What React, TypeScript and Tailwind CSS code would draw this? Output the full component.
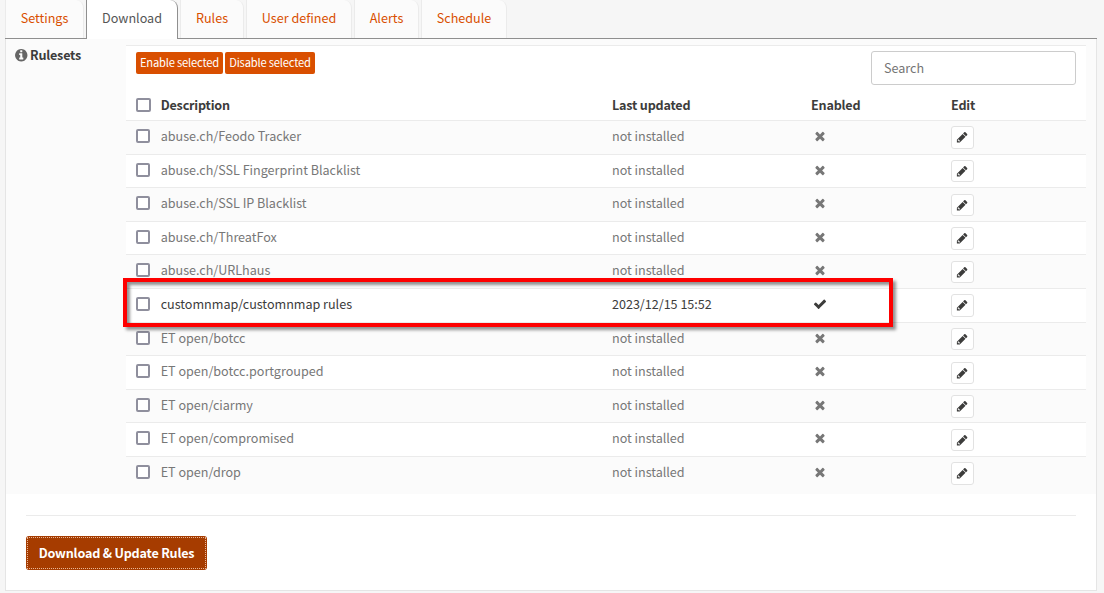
import { useState } from "react";

const ICONS = {
  times:
    "M1490 1322q0 40-28 68l-136 136q-28 28-68 28t-68-28l-294-294-294 294q-28 28-68 28t-68-28l-136-136q-28-28-28-68t28-68l294-294-294-294q-28-28-28-68t28-68l136-136q28-28 68-28t68 28l294 294 294-294q28-28 68-28t68 28l136 136q28 28 28 68t-28 68l-294 294 294 294q28 28 28 68z",
  check:
    "M1671 566q0 40-28 68l-724 724-136 136q-28 28-68 28t-68-28l-136-136-362-362q-28-28-28-68t28-68l136-136q28-28 68-28t68 28l294 295 656-657q28-28 68-28t68 28l136 136q28 28 28 68z",
  pencil:
    "M491 1536l91-91-235-235-91 91v107h128v128h107zM960 416l416 416-832 832h-416v-416zm683 96q0 53-37 90l-166 166-416-416 166-165q36-38 90-38 53 0 91 38l235 234q37 39 37 91z",
  info: "M1152 1376v-160q0-14-9-23t-23-9h-96v-512q0-14-9-23t-23-9h-320q-14 0-23 9t-9 23v160q0 14 9 23t23 9h96v320h-96q-14 0-23 9t-9 23v160q0 14 9 23t23 9h448q14 0 23-9t9-23zm-128-896v-160q0-14-9-23t-23-9h-192q-14 0-23 9t-9 23v160q0 14 9 23t23 9h192q14 0 23-9t9-23zm640 416q0 209-103 385.5t-279.5 279.5-385.5 103-385.5-103-279.5-279.5-103-385.5 103-385.5 279.5-279.5 385.5-103 385.5 103 279.5 279.5 103 385.5z",
};

function Icon({ name, className }: { name: keyof typeof ICONS; className: string }) {
  return (
    <svg viewBox="0 0 1792 1792" fill="currentColor" className={className} aria-hidden="true">
      <path d={ICONS[name]} />
    </svg>
  );
}

function Checkbox({ width = "w-[14px]" }: { width?: string }) {
  const [on, setOn] = useState(false);
  return (
    <button
      type="button"
      role="checkbox"
      aria-checked={on}
      onClick={() => setOn(!on)}
      className={`block h-[14px] ${width} shrink-0 rounded-[2px] border-2 border-[#8f8f9d] ${on ? "bg-[#d94f00]" : "bg-white"}`}
    />
  );
}

const TABS = [
  { label: "Settings", width: "w-[79px]" },
  { label: "Download", width: "w-[92px]" },
  { label: "Rules", width: "w-[64px]" },
  { label: "User defined", width: "w-[106px]" },
  { label: "Alerts", width: "w-[65px]" },
  { label: "Schedule", width: "w-[86px]" },
];

const RULESETS = [
  { name: "abuse.ch/Feodo Tracker" },
  { name: "abuse.ch/SSL Fingerprint Blacklist" },
  { name: "abuse.ch/SSL IP Blacklist" },
  { name: "abuse.ch/ThreatFox" },
  { name: "abuse.ch/URLhaus" },
  { name: "customnmap/customnmap rules", updated: "2023/12/15 15:52" },
  { name: "ET open/botcc" },
  { name: "ET open/botcc.portgrouped" },
  { name: "ET open/ciarmy" },
  { name: "ET open/compromised" },
  { name: "ET open/drop" },
];

const GRID = "grid grid-cols-[34.7px_451.3px_199px_140px_1fr]";

export default function App() {
  return (
    <div className="relative flex h-[593px] w-[1104px] flex-col overflow-hidden bg-[#f6f6f6] pl-[5px] pr-[7px] font-['Noto_Sans_CJK_SC',sans-serif] text-[12.6px] leading-5 text-[#3c3c3b]">
      <nav className="flex h-[39px] shrink-0 gap-[2px] border-b border-[#8f8f8f]">
        {TABS.map((t) => (
          <a
            key={t.label}
            className={`${t.width} flex shrink-0 justify-center rounded-tr-[8px] border-x pt-[8px] ${
              t.label === "Download"
                ? "h-[39px] border-[#8f8f8f] bg-white text-[#555]"
                : "h-[38px] border-[#ebebeb] bg-[#fbfbfb] text-[#d94f00]"
            }`}
          >
            {t.label}
          </a>
        ))}
      </nav>

      <main className="flex h-[552px] flex-col border border-t-0 border-[#e5e5e5] bg-white">
        <div className="flex h-[455px] shrink-0 bg-[#fbfbfb] pr-[10px] pt-[6px]">
          <div className="flex w-[120px] shrink-0 items-start pl-[8px]">
            <Icon name="info" className="mt-[3px] size-[14.5px] text-[#666]" />
            <span className="ml-[1.5px] font-bold tracking-[-0.2px]">Rulesets</span>
          </div>

          <section className="flex flex-1 flex-col">
            <div className="flex h-[75px] shrink-0 flex-col border-t border-[#ebebeb] bg-white">
              <div className="flex h-[49px] shrink-0 items-start justify-between pl-[10px] pr-[10px]">
                <div className="flex gap-[2px] pt-[6px] text-[11.2px] tracking-[-0.2px] text-white">
                  <button className="h-[22px] w-[87px] rounded-[2px] bg-[#d94f00] pb-[2px] leading-[20px]">
                    Enable selected
                  </button>
                  <button className="h-[22px] w-[90px] rounded-[2px] bg-[#d94f00] pb-[2px] leading-[20px]">
                    Disable selected
                  </button>
                </div>
                <input
                  placeholder="Search"
                  className="mt-[5px] h-[34px] w-[205px] rounded-[3px] border border-[#ccc] bg-white px-3 pb-[2px] outline-none placeholder:text-[#757575]"
                />
              </div>
              <div className={`${GRID} font-bold tracking-[-0.2px]`}>
                <span className="pl-[10px] pt-[3px]">
                  <Checkbox width="w-[15px]" />
                </span>
                <span>Description</span>
                <span>Last updated</span>
                <span>Enabled</span>
                <span>Edit</span>
              </div>
            </div>
            {RULESETS.map((r, i) => (
              <div
                key={r.name}
                className={`${GRID} h-[33.6px] shrink-0 border-t border-[#ebebeb] pt-[5px] tracking-[-0.02px] ${i % 2 ? "bg-white" : "bg-[#fbfbfb]"} ${r.updated ? "" : "text-[#777]"}`}
              >
                <span className="pl-[10px] pt-[3px]">
                  <Checkbox />
                </span>
                <span>{r.name}</span>
                <span>{r.updated ?? "not installed"}</span>
                <span className="pl-[2px] pt-[3px]">
                  <Icon name={r.updated ? "check" : "times"} className="size-[14px]" />
                </span>
                <button className="mt-[0.4px] flex h-[22.4px] w-[23px] items-center justify-center rounded-[3px] border border-[#e2e2e2] bg-white text-[#3c3c3b]">
                  <Icon name="pencil" className="size-[12.4px]" />
                </button>
              </div>
            ))}
          </section>
        </div>
        <hr className="mx-5 mt-[21px] border-[#ebebeb]" />
        <button className="ml-5 mt-5 h-[34px] w-[181px] rounded-[3px] bg-[#a63c00] p-px font-bold tracking-[-0.2px] text-white">
          <span className="flex h-full items-center justify-center border border-dotted border-[#e9b698]">
            Download &amp; Update Rules
          </span>
        </button>
      </main>

      <div className="pointer-events-none absolute left-[123px] top-[278px] h-[49px] w-[770px] border-4 border-[#fe0000] shadow-[3px_3px_3px_rgba(0,0,0,0.42),inset_3px_3px_3px_rgba(0,0,0,0.42)]" />
    </div>
  );
}
